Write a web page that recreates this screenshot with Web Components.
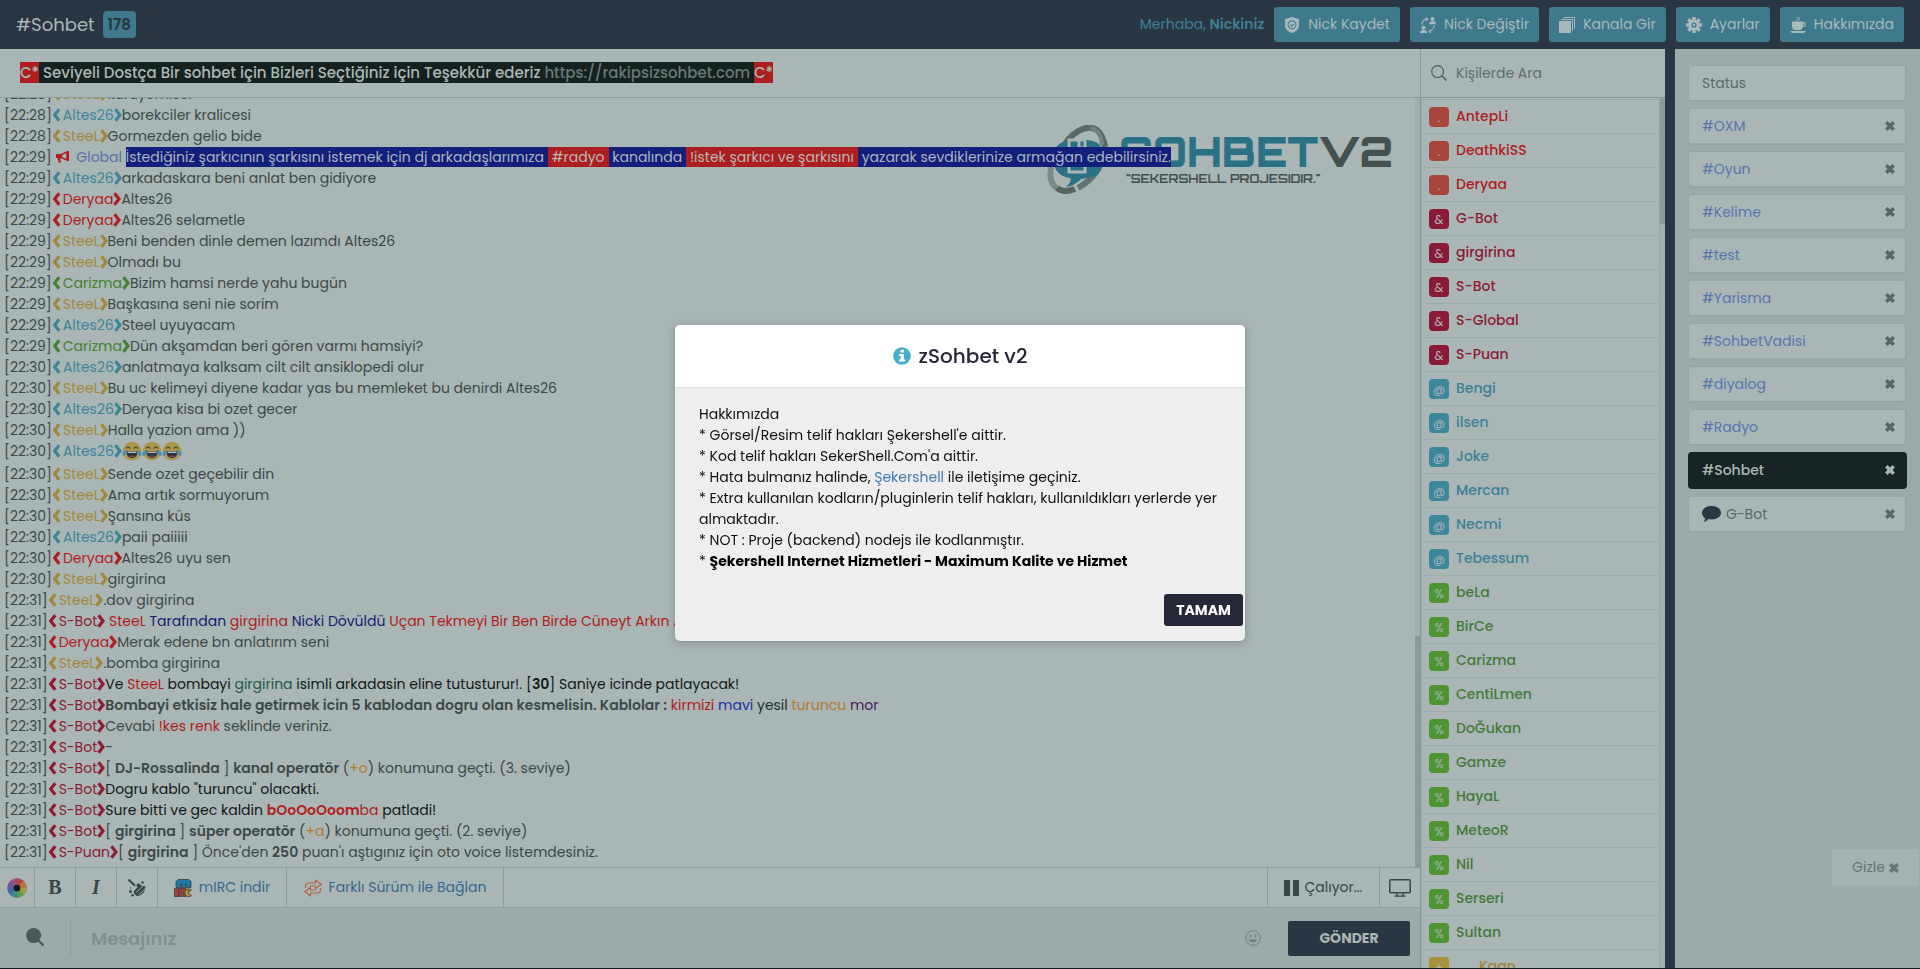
<!DOCTYPE html>
<html lang="tr">
<head>
<meta charset="utf-8">
<title>zSohbet v2</title>
<style>
  html, body { margin: 0; height: 100%; }
  body {
    font-family: Poppins, Inter, "Noto Sans", sans-serif;
    font-size: 14px; line-height: 21px; color: #3c4949; background: #101a20;
    --surface: #a9b6b5; --muted: #9daaaa; --line: #8c9b9b; --dark: #2a3742; --teal: #3e7a8b;
  }
</style>
</head>
<body>
<chat-app></chat-app>
<script>
const define = (name, html, setup) => {
  const template = document.createElement('template');
  template.innerHTML = html;
  customElements.define(name, class extends HTMLElement {
    connectedCallback() {
      if (this.shadowRoot) return;
      this.attachShadow({ mode: 'open' }).append(template.content.cloneNode(true));
      if (setup) setup(this, this.shadowRoot);
    }
  });
};

/* ---------- icons ---------- */
const tooth = Array.from({ length: 8 }, (_, i) => `<rect x="6.3" y="0" width="3.4" height="4" rx=".6" transform="rotate(${i * 45} 8 8)"/>`).join('');
const petals = ['#b8433f', '#b5743c', '#a79a42', '#5f9a4b', '#3f8f86', '#3f6d9a', '#6d5a9c', '#a04f82'].map((c, i) =>
  `<path fill="${c}" d="M8 8 4.7 .8A8 8 0 0 1 11.3 .8Z" transform="rotate(${i * 45 + 22} 8 8)"/>`).join('');
const ICONS = {
  shield: ['0 0 16 16', '<path fill="currentColor" fill-rule="evenodd" d="M8 0 15 2.2V8c0 4-3 6.800-7 8C4 14.800 1 12 1 8V2.200ZM8 3.300a4.500 4.500 0 1 0 0 9 4.500 4.500 0 0 0 0-9Z"/><circle cx="8" cy="7.800" r="3.400" fill="currentColor"/><path d="M6.200 7.800 7.600 9.200 10 6.600" fill="none" stroke="#3e7a8b" stroke-width="1.200"/>'],
  swap: ['0 0 16 16', '<g fill="currentColor"><circle cx="12.500" cy="2" r="2"/><path d="M9 7.200c0-2.400 1.500-3 3.500-3s3.500.6 3.500 3Z"/><circle cx="3.500" cy="10.800" r="2"/><path d="M0 16c0-2.400 1.500-3 3.500-3S7 13.600 7 16Z"/></g><g fill="none" stroke="currentColor" stroke-width="1.200"><path d="M2 7.500C2 4.500 4 2.300 7.300 2M5.600.4 7.600 2 6 3.800"/><path d="M14 8.500c0 3-2 5.200-4.800 5.700m1.700 1.600-2-1.600 1.500-1.900" stroke-dasharray="3 1"/></g>'],
  copy: ['0 0 16 16', '<path fill="currentColor" d="M0 4H12V16H0Z"/><path d="M2 2.500H13.500V14M4 .5H15.500V12" fill="none" stroke="currentColor"/>'],
  gear: ['0 0 16 16', `<g fill="currentColor">${tooth}</g><circle cx="8" cy="8" r="4.200" fill="none" stroke="currentColor" stroke-width="3.200"/><circle cx="8" cy="8" r="1.300" fill="currentColor"/>`],
  cup: ['0 0 16 16', '<path fill="currentColor" d="M2 4.500H13V9c0 2.500-1.500 4-3.500 4h-4C3.500 13 2 11.500 2 9ZM0 14H16L14 16H2Z"/><path d="M13 5.800h2V9h-2.400M7 4V2.500M9 3V.5M7.500 1V0" fill="none" stroke="currentColor" stroke-width="1.200"/>'],
  lens: ['0 0 16 16', '<circle cx="6.600" cy="6.600" r="5.900" fill="none" stroke="currentColor" stroke-width="1.200"/><path d="m11 11 4.500 4.500" stroke="currentColor" stroke-width="1.500"/>'],
  search: ['0 0 18 18', '<circle cx="7.600" cy="7.600" r="7.500" fill="currentColor"/><path d="m12 12 5 5" stroke="currentColor" stroke-width="2.200" stroke-linecap="round"/>'],
  close: ['0 0 10 10', '<path d="m1.300 1.300 7.400 7.400m0-7.400-7.400 7.400" stroke="currentColor" stroke-width="3.500"/>'],
  left: ['0 0 11 14', '<path d="M7.200 1.200 2.700 7 7.200 12.800" fill="none" stroke="currentColor" stroke-width="3.200"/>'],
  right: ['0 0 8 14', '<path d="M1.500 1.200 6 7 1.500 12.800" fill="none" stroke="currentColor" stroke-width="3.200"/>'],
  horn: ['0 0 14 12', '<path fill="currentColor" d="M0 3h5v4H4l1 4.500H2.500L1.500 7H0Z"/><path d="M5.500 3.500 11 1v8L5.500 6.700Z" fill="none" stroke="currentColor" stroke-width="1.400"/><path fill="currentColor" d="M11 0h2v10h-2Z"/>'],
  bubble: ['0 0 19 16', '<path fill="currentColor" d="M9.500 0C15 0 19 3 19 6.800S15 13.500 9.500 13.500c-1.200 0-2.200-.1-3.200-.4C5 15 3.500 15.700 1.500 15.900 2.700 14.800 3 13.600 2.900 12 1.100 10.700 0 8.900 0 6.800 0 3 4 0 9.500 0Z"/>'],
  pause: ['0 0 15 16', '<path fill="currentColor" d="M0 0H6V16H0ZM9 0H15V16H9Z"/>'],
  screen: ['0 0 22 18', '<rect x=".8" y=".8" width="20.400" height="13" rx="1" fill="none" stroke="currentColor" stroke-width="1.500"/><path d="M8 14v3M14 14v3M5.500 17.200h11" stroke="currentColor" stroke-width="1.300"/>'],
  smile: ['0 0 16 16', '<circle cx="8" cy="8" r="7.300" fill="none" stroke="currentColor"/><path d="M5.500 4.500v3M10.500 4.500v3" stroke="currentColor" stroke-width="1.400"/><path fill="currentColor" d="M4 9.500h8c-.5 4-7.500 4-8 0Z"/>'],
  wheel: ['0 0 16 16', `<circle cx="8" cy="8" r="8" fill="#7d8a8a"/><g transform="translate(.4 .4) scale(.95)">${petals}</g><circle cx="8" cy="8" r="2.700" fill="#0e1a1c"/>`],
  broom: ['0 0 18 18', '<path d="M.5.5 7 6.800" stroke="currentColor" stroke-width="2"/><path fill="currentColor" d="m6.800 11 5-5 5.700 1.500c0 5-3.500 9-8 9.500-2-.5-3.500-2-4-4Z"/><path d="m8 13.500 7-6.500m-4.500 9 7-6.500" stroke="#a9b6b5" stroke-width=".9"/><g fill="currentColor"><circle cx="10.500" cy="6.500" r="2"/><circle cx="14.500" cy="3.500" r="1.300"/><circle cx="2.500" cy="12.500" r="1.500"/><circle cx="4.500" cy="16.200" r="1.200"/><circle cx="2.500" cy="9" r=".7"/></g>'],
  mirc: ['0 0 18 18', '<g stroke="#3c3a3c" stroke-width=".8"><path fill="#1d78a8" d="M2 8.500V2.500L4 .5H15L17 2.500V8.500H12.500V5H11.500V8.500H7.500V5H6.500V8.500Z"/><path fill="#a8413d" d="M.5 9.500H4.500V17.500H.5ZM5 9.500H12V17.500H9V13H8V17.500H5Z"/><path fill="#a8963c" d="M17.500 11a4 4 0 1 0 0 5.500L14 14Z"/></g><circle cx="14.500" cy="11.500" r=".7" fill="#222"/>'],
  arrows: ['0 0 18 18', '<g fill="none" stroke="#b2633f" stroke-width="1.100" stroke-linejoin="round"><path d="M1.500 9V7.500Q1.500 4 4.500 4H11.500V1L17.200 5.500 11.500 9.500V7H6"/><path d="M16.500 9V10.500Q16.500 14 13.500 14H6.500V17L.8 12.500 6.500 8.500V11H12"/></g>'],
  info: ['0 0 18 18', '<circle cx="9" cy="9" r="8.800" fill="#48aecd"/><path fill="#fff" d="M7.400 2.700h3.500v2.800H7.400ZM6.200 7h4.700v5.600h1.300v2H6.200v-2h1.500V9H6.200Z"/>'],
  joy: ['0 0 20 20', '<circle cx="10" cy="10" r="9.300" fill="#ad9645"/><path d="M4 7.500c.8-2 3.200-2 4 0M12 7.500c.8-2 3.200-2 4 0" fill="none" stroke="#343a40" stroke-width="1.200"/><path fill="#2f343e" d="M4.500 10h11c0 4.500-2 7-5.500 7s-5.500-2.500-5.500-7Z"/><path fill="#b5bcbc" d="M5.500 10.500h9v1.500h-9Z"/><path fill="#8c4a5c" d="M7 15.500c1-1.500 5-1.500 6 0-1 1-5 1-6 0Z"/><path fill="#4e90b5" d="M4.300 8.500C4.500 13 3.500 15 1.800 15S-.3 12.500 1 11Zm11.400 0C15.500 13 16.500 15 18.200 15s2.100-2.500.8-4Z"/>']
};
define('ui-icon', `<style>:host{display:inline-block;width:var(--w,16px);height:var(--h,16px);flex:none}svg{display:block;width:var(--w,16px);height:var(--h,16px)}</style><svg aria-hidden="true"></svg>`, (host, root) => {
  const [box, body] = ICONS[host.getAttribute('name')];
  const svg = root.querySelector('svg');
  svg.setAttribute('viewBox', box);
  svg.innerHTML = body;
});

/* ---------- header ---------- */
customElements.define('top-bar', class extends HTMLElement {
  connectedCallback() {
    const items = [['shield', 'Nick Kaydet'], ['swap', 'Nick Değiştir'], ['copy', 'Kanala Gir'], ['gear', 'Ayarlar'], ['cup', 'Hakkımızda']];
    this.attachShadow({ mode: 'open' }).innerHTML = `<style>
      :host{display:flex;align-items:center;height:49px;padding:0 16px;background:var(--dark);box-sizing:border-box}
      h1{margin:0 8px 0 0;font-size:18px;line-height:27px;font-weight:400;color:#aab6b8}
      .count{padding:0 5px;border-radius:4px;font-size:15px;line-height:27px;background:var(--teal);color:#26343c;font-weight:600}
      .right{display:flex;align-items:center;gap:10px;margin-left:auto;color:#3f7f92}
      b{font-weight:600}
      button{display:flex;align-items:center;gap:8px;height:35px;padding:0 10px;border:0;border-radius:3px;background:var(--teal);color:#a9b9bb;font-family:inherit;font-size:14px;line-height:21px;white-space:nowrap}
    </style><h1>#Sohbet</h1><span class="count">178</span>
    <div class="right"><span>Merhaba, <b>Nickiniz</b></span>${items.map(([i, t]) => `<button type="button"><ui-icon name="${i}"></ui-icon>${t}</button>`).join('')}</div>`;
  }
});

/* ---------- chat ---------- */
define('chat-line', `<style>
  :host{display:block;white-space:nowrap;min-height:21px}
  .nick{color:var(--c)}
  ui-icon{vertical-align:-2px;--w:8px;--h:14px}
  ui-icon[name=left]{--w:11px}
  :host([notice]) .nick{display:none}
</style><span class="time"></span><span class="nick"><ui-icon name="left"></ui-icon><span class="name"></span><ui-icon name="right"></ui-icon></span><slot></slot>`, (host, root) => {
  root.querySelector('.time').textContent = `[${host.getAttribute('time')}]`;
  root.querySelector('.name').textContent = host.getAttribute('nick') || '';
});
const NICKS = { Altes26: '#3f8599', SteeL: '#a3883a', Deryaa: '#b01e20', Carizma: '#468030', 'S-Bot': '#8d1c36', 'S-Puan': '#8d1c36' };
const LINES = [
  ['22:28', 'SteeL', 'kuruyemisci'],
  ['22:28', 'Altes26', 'borekciler kralicesi'],
  ['22:28', 'SteeL', 'Gormezden gelio bide'],
  ['22:29', '', ' <ui-icon class="horn" name="horn"></ui-icon> <span class="g">Global</span> <span class="ad">İstediğiniz şarkıcının şarkısını istemek için dj arkadaşlarımıza <em>#radyo</em> kanalında <em>!istek şarkıcı ve şarkısını</em> yazarak sevdiklerinize armağan edebilirsiniz.</span>'],
  ['22:29', 'Altes26', 'arkadaskara beni anlat ben gidiyore'],
  ['22:29', 'Deryaa', 'Altes26'],
  ['22:29', 'Deryaa', 'Altes26 selametle'],
  ['22:29', 'SteeL', 'Beni benden dinle demen lazımdı Altes26'],
  ['22:29', 'SteeL', 'Olmadı bu'],
  ['22:29', 'Carizma', 'Bizim hamsi nerde yahu bugün'],
  ['22:29', 'SteeL', 'Başkasına seni nie sorim'],
  ['22:29', 'Altes26', 'Steel uyuyacam'],
  ['22:29', 'Carizma', 'Dün akşamdan beri gören varmı hamsiyi?'],
  ['22:30', 'Altes26', 'anlatmaya kalksam cilt cilt ansiklopedi olur'],
  ['22:30', 'SteeL', 'Bu uc kelimeyi diyene kadar yas bu memleket bu denirdi Altes26'],
  ['22:30', 'Altes26', 'Deryaa kisa bi ozet gecer'],
  ['22:30', 'SteeL', 'Halla yazion ama ))'],
  ['22:30', 'Altes26', '<ui-icon class="joy" name="joy"></ui-icon><ui-icon class="joy" name="joy"></ui-icon><ui-icon class="joy" name="joy"></ui-icon>'],
  ['22:30', 'SteeL', 'Sende ozet geçebilir din'],
  ['22:30', 'SteeL', 'Ama artık sormuyorum'],
  ['22:30', 'SteeL', 'Şansına küs'],
  ['22:30', 'Altes26', 'paii paiiiii'],
  ['22:30', 'Deryaa', 'Altes26 uyu sen'],
  ['22:30', 'SteeL', 'girgirina'],
  ['22:31', 'SteeL', '.dov girgirina'],
  ['22:31', 'S-Bot', ' <span class="r">SteeL</span> <span class="n">Tarafından</span> <span class="r">girgirina</span> <span class="n">Nicki Dövüldü</span> <span class="r">Uçan Tekmeyi Bir Ben Birde Cüneyt Arkın Atar</span>'],
  ['22:31', 'Deryaa', 'Merak edene bn anlatırım seni'],
  ['22:31', 'SteeL', '.bomba girgirina'],
  ['22:31', 'S-Bot', '<span class="k">Ve <span class="r">SteeL</span> bombayi <span class="gr">girgirina</span> isimli arkadasin eline tutusturur!. [<b>30</b>] Saniye icinde patlayacak!</span>'],
  ['22:31', 'S-Bot', '<b>Bombayi etkisiz hale getirmek icin 5 kablodan dogru olan kesmelisin. Kablolar :</b> <span class="r">kirmizi</span> <span class="bl">mavi</span> <span class="dg">yesil</span> <span class="o">turuncu</span> <span class="p">mor</span>'],
  ['22:31', 'S-Bot', 'Cevabi <span class="r">!kes renk</span> seklinde veriniz.'],
  ['22:31', 'S-Bot', '-'],
  ['22:31', 'S-Bot', '[ <b>DJ-Rossalinda</b> ] <b>kanal operatör</b> (<span class="o">+o</span>) konumuna geçti. (3. seviye)'],
  ['22:31', 'S-Bot', '<span class="k">Dogru kablo "turuncu" olacakti.</span>'],
  ['22:31', 'S-Bot', '<span class="k">Sure bitti ve gec kaldin <span class="r"><b>bOoOoOoom</b>ba</span> patladi!</span>'],
  ['22:31', 'S-Bot', '[ <b>girgirina</b> ] <b>süper operatör</b> (<span class="o">+a</span>) konumuna geçti. (2. seviye)'],
  ['22:31', 'S-Puan', "[ <b>girgirina</b> ] Önce'den <b>250</b> puan'ı aştıgınız için oto voice listemdesiniz."]
];
define('brand-logo', `<style>:host{display:block;width:350px;height:72px}svg{display:block}
  text{font-family:Orbitron,"DejaVu Sans",sans-serif;font-weight:700}
  .word{font-size:41px;font-weight:900;fill:#2b7186}.v{fill:#435151}.tag{font-size:12px;fill:#435151}</style>
<svg width="350" height="72" viewBox="0 0 350 72" role="img" aria-label="Sohbet V2">
  <g fill="none" stroke-width="6"><path d="M14 26C22 8 40-2 50 5c5 4 7 10 8 17" stroke="#5b6868"/><path d="M44 3c6 1 11 8 11 17" stroke="#758282" stroke-width="4"/><path d="M8 32C2 44 1 58 10 63" stroke="#7d8a8a"/><path d="M10 63c6 5 13 3 18 1" stroke="#56635f"/><path d="M31 63C45 55 56 42 57 25" stroke="#667373"/></g>
  <path fill="#2b7186" d="M12 19c8-5 32-6 40 0 6 7 5 24-1 30-4 4-13 4-17 5-4 4-8 7-15 8 4-4 6-7 4-9C10 51 5 42 7 30c0-5 2-8 5-11Z"/>
  <path fill="none" stroke="#a9b6b5" stroke-width="3" d="M22 15H38V47H22ZM32 15v8h8"/>
  <text class="word" x="72" y="42">SOHBET<tspan class="v">V2</tspan></text><text class="tag" x="79" y="58">"SEKERSHELL PROJESIDIR."</text>
</svg>`);
customElements.define('chat-log', class extends HTMLElement {
  connectedCallback() {
    this.attachShadow({ mode: 'open' }).innerHTML = `<style>
      :host{display:flex;min-height:0;position:relative;overflow:hidden;background:var(--surface)}
      .lines{flex:1;min-width:0;display:flex;flex-direction:column;justify-content:flex-end;overflow:hidden;padding:0 0 4px 4px}
      chat-line{position:relative;flex:none}
      brand-logo{position:absolute;right:23px;top:27px}
      .bar{flex:none;width:5px;background:#a1aeae;display:flex;flex-direction:column;justify-content:flex-end}
      .bar::after{content:"";height:30%;background:#8c9a9a}
      .horn{--w:14px;--h:12px;color:#b01e20;vertical-align:-1px;margin-right:3px}
      .joy{--w:20px;--h:20px;vertical-align:-8px;padding-bottom:3px}
      .g{color:#6070a5}
      .ad{display:inline-block;line-height:20px;background:#131f7a;color:#a9b6c0}
      em{font-style:normal;background:#ad1e20;color:#b8b8b4;padding:0 4px;display:inline-block}
      b{font-weight:600}
      .r{color:#b01e20}.n{color:#13206f}.k{color:#10191a}.gr{color:#20584a}.bl{color:#1c2fa8}.dg{color:#1b332c}.o{color:#b57a2c}.p{color:#4a1a55}
    </style><brand-logo></brand-logo><div class="lines">${LINES.map(([t, n, m]) =>
      `<chat-line time="${t}" nick="${n}" ${n ? `style="--c:${NICKS[n]}"` : 'notice'}>${m}</chat-line>`).join('')}</div><div class="bar"></div>`;
  }
});
define('topic-bar', `<style>
  :host{display:flex;align-items:center;height:49px;box-sizing:border-box;padding:0 20px 2px;background:var(--surface);border-bottom:1px solid var(--line);font-size:15px;line-height:21px}
  p{margin:0;background:#14211f;color:#a9b6b5;font-weight:500;white-space:nowrap}
  i{font-style:normal;background:#ad1e20;display:inline-block}
  a{color:#6b7777;text-decoration:none}
</style><p><i>C*</i> Seviyeli Dostça Bir sohbet için Bizleri Seçtiğiniz için Teşekkür ederiz <a href="#">https://rakipsizsohbet.com</a> <i>C*</i></p>`);
define('tool-bar', `<style>
  :host{display:flex;height:41px;box-sizing:border-box;background:var(--surface);border:solid var(--line);border-width:1px 0}
  button,a{display:flex;align-items:center;justify-content:center;box-sizing:border-box;width:41px;padding:0;border:0;border-right:1px solid var(--line);background:none;color:#36474a;font-family:inherit;font-size:14px;text-decoration:none;white-space:nowrap}
  a{gap:7px;color:#38688f}
  .wheel{width:35px;--w:20px;--h:20px}
  .s{font:700 20px "Liberation Serif",serif}
  .i{font-style:italic}
  .brush,a{--w:18px;--h:18px}
  .mirc{width:129px}.alt{width:217px}
  .play{margin-left:auto;width:113px;gap:5px;border-left:1px solid var(--line);--w:15px}
  .screen{width:40px;border:0;--w:22px;--h:18px}
</style>
<button type="button" class="wheel" aria-label="Renk"><ui-icon name="wheel"></ui-icon></button><button type="button" class="s">B</button><button type="button" class="s i">I</button><button type="button" class="brush" aria-label="Temizle"><ui-icon name="broom"></ui-icon></button>
<a class="mirc" href="#"><ui-icon name="mirc"></ui-icon>mIRC indir</a><a class="alt" href="#"><ui-icon name="arrows"></ui-icon>Farklı Sürüm ile Bağlan</a>
<button type="button" class="play"><ui-icon name="pause"></ui-icon>Çalıyor...</button><button type="button" class="screen" aria-label="Ekran"><ui-icon name="screen"></ui-icon></button>`);
define('message-form', `<style>
  :host{display:block;background:var(--muted)}
  form{display:flex;align-items:center;height:60px;padding-right:10px;margin:0}
  .find{width:71px;height:38px;border:0;border-right:1px solid var(--line);background:none;padding:0;color:#4a5959;--w:18px;--h:18px}
  input{flex:1;min-width:0;border:0;background:none;padding:0 20px;font-family:inherit;font-size:18px;font-weight:600;color:#4a5959;outline:0}
  input::placeholder{color:#80908f;opacity:1}
  .smile{border:0;background:none;padding:0;margin-right:27px;color:#6f7e7e;display:flex}
  .send{width:122px;height:35px;border:0;border-radius:2px;background:var(--dark);color:#a9b6b5;font-family:inherit;font-size:14px;font-weight:700}
</style><form><button type="button" class="find" aria-label="Ara"><ui-icon name="search"></ui-icon></button><input type="text" placeholder="Mesajınız" aria-label="Mesajınız"><button type="button" class="smile" aria-label="Gülücük"><ui-icon name="smile"></ui-icon></button><button type="button" class="send">GÖNDER</button></form>`);

/* ---------- users ---------- */
const USERS = [['.', '#a8463c', '#b01e20', 'AntepLi DeathkiSS Deryaa'], ['&amp;', '#8a1b38', '#8d1c36', 'G-Bot girgirina S-Bot S-Global S-Puan'],
  ['@', '#3d879b', '#3d8096', 'Bengi ilsen Joke Mercan Necmi Tebessum'], ['%', '#4f9433', '#447a38', 'beLa BirCe Carizma CentiLmen DoĞukan Gamze HayaL MeteoR Nil Serseri Sultan'], ['+', '#a8923a', '#a3863a', 'Kaan']];
customElements.define('user-list', class extends HTMLElement {
  connectedCallback() {
    this.attachShadow({ mode: 'open' }).innerHTML = `<style>
      :host{display:flex;flex-direction:column;min-height:0;background:var(--surface);border-left:1px solid var(--line)}
      label{display:flex;align-items:center;gap:9px;flex:none;height:49px;box-sizing:border-box;padding-left:10px;border-bottom:1px solid var(--line);color:#4f5e5e}
      input{flex:1;min-width:0;border:0;padding:0;background:none;font-family:inherit;font-size:14px;color:#56656a}
      input::placeholder{color:#5e6d6d;opacity:1}
      .body{flex:1;min-height:0;display:flex;overflow:hidden}
      ul{flex:1;margin:1px 0 0;padding:0;list-style:none;border:1px solid #9aa8a8;border-width:1px 1px 0 1px}
      li{display:flex;align-items:center;gap:7px;height:34px;box-sizing:border-box;padding-left:7px;border-bottom:1px solid #9facac;font-weight:500}
      .mark{width:20px;height:20px;line-height:21px;border-radius:4px;text-align:center;color:#a9b6b5;font-size:12px;font-weight:400}
      li:last-child .name{padding-left:23px}
      .bar{width:5px;background:#a3b0b0}
      .bar::before{content:"";display:block;height:126px;background:#8c9a9a}
    </style><label><ui-icon name="lens"></ui-icon><input type="search" placeholder="Kişilerde Ara" aria-label="Kişilerde Ara"></label>
    <div class="body"><ul>${USERS.map(([m, bg, c, names]) => names.split(' ').map(n => `<li style="color:${c}"><span class="mark" style="background:${bg}">${m}</span><span class="name">${n}</span></li>`).join('')).join('')}</ul><div class="bar"></div></div>`;
  }
});

/* ---------- tabs ---------- */
customElements.define('room-tabs', class extends HTMLElement {
  connectedCallback() {
    const rooms = ['Status', '#OXM', '#Oyun', '#Kelime', '#test', '#Yarisma', '#SohbetVadisi', '#diyalog', '#Radyo', '#Sohbet', 'G-Bot'];
    this.attachShadow({ mode: 'open' }).innerHTML = `<style>
      :host{display:block;box-sizing:border-box;position:relative;background:var(--muted);border-left:10px solid var(--dark);padding:16px 13px 0}
      div{display:flex;align-items:center;height:37px;box-sizing:border-box;margin-bottom:6px;padding:0 10px 0 13px;border:1px solid #97a5a5;border-right-width:2px;border-bottom-width:2px;border-radius:4px;background:var(--surface);color:#5a75ad}
      span{flex:1}
      button{border:0;background:none;padding:0;display:flex;color:#566565;--w:10px;--h:10px}
      .plain{color:#5a6a6c}
      .on{background:#172324;border-color:#172324;color:#aab6b5;font-weight:500}.on button{color:#aab6b5}
      .dm{margin-top:7px}.dm span{display:flex;align-items:center;gap:5px}.dm ui-icon[name=bubble]{--w:19px;--h:16px;color:var(--dark)}
      .hide{position:absolute;right:0;bottom:81px;width:89px;height:39px;box-sizing:border-box;justify-content:center;align-items:center;gap:4px;border:1px dotted #95a3a3;background:#a5b2b1;color:#667575;font-family:inherit;font-size:14px}
    </style>${rooms.map((r, i) => `<div class="${i === 0 ? 'plain' : r === '#Sohbet' ? 'on' : i === 10 ? 'plain dm' : ''}"><span>${i === 10 ? '<ui-icon name="bubble"></ui-icon>' : ''}${r}</span>${i ? `<button type="button" aria-label="Kapat"><ui-icon name="close"></ui-icon></button>` : ''}</div>`).join('')}
    <button type="button" class="hide">Gizle <ui-icon name="close"></ui-icon></button>`;
  }
});

/* ---------- dialog ---------- */
define('about-dialog', `<style>
  :host{position:fixed;inset:0;display:flex;align-items:center;justify-content:center;padding-bottom:3px;box-sizing:border-box}
  section{width:570px;background:#eee;border-radius:5px;overflow:hidden;box-shadow:0 2px 10px rgba(0,0,0,.22);color:#10100f}
  h2{display:flex;align-items:center;justify-content:center;gap:8px;margin:0;height:63px;box-sizing:border-box;background:#fff;border-bottom:1px solid #ddd;font-size:20px;line-height:30px;font-weight:500;color:#262838;--w:18px;--h:18px}
  p{margin:0;padding:16px 24px 0}
  a{color:#457bb0;text-decoration:none}
  footer{display:flex;justify-content:flex-end;padding:22px 2px 15px}
  button{width:79px;height:32px;border:0;border-radius:3px;background:#262838;color:#fff;font-family:inherit;font-size:14px;font-weight:700}
  b{color:#000;font-weight:700}
</style><section role="dialog" aria-labelledby="t"><h2 id="t"><ui-icon name="info"></ui-icon>zSohbet v2</h2>
<p>Hakkımızda<br>* Görsel/Resim telif hakları Şekershell'e aittir.<br>* Kod telif hakları SekerShell.Com'a aittir.<br>* Hata bulmanız halinde, <a href="#">Şekershell</a> ile iletişime geçiniz.<br>* Extra kullanılan kodların/pluginlerin telif hakları, kullanıldıkları yerlerde yer almaktadır.<br>* NOT : Proje (backend) nodejs ile kodlanmıştır.<br>* <b>Şekershell Internet Hizmetleri - Maximum Kalite ve Hizmet</b></p>
<footer><button type="button">TAMAM</button></footer></section>`);

define('chat-app', `<style>
  :host{display:grid;grid-template:auto minmax(0,1fr)/minmax(0,1fr) 245px 255px;height:100vh;box-sizing:border-box;border-bottom:1px solid #101a20}
  top-bar{grid-column:1/-1}
  main{display:flex;flex-direction:column;min-height:0}
  chat-log{flex:1}
</style><top-bar></top-bar><main><topic-bar></topic-bar><chat-log></chat-log><tool-bar></tool-bar><message-form></message-form></main><user-list></user-list><room-tabs></room-tabs><about-dialog></about-dialog>`);
</script>
</body>
</html>
